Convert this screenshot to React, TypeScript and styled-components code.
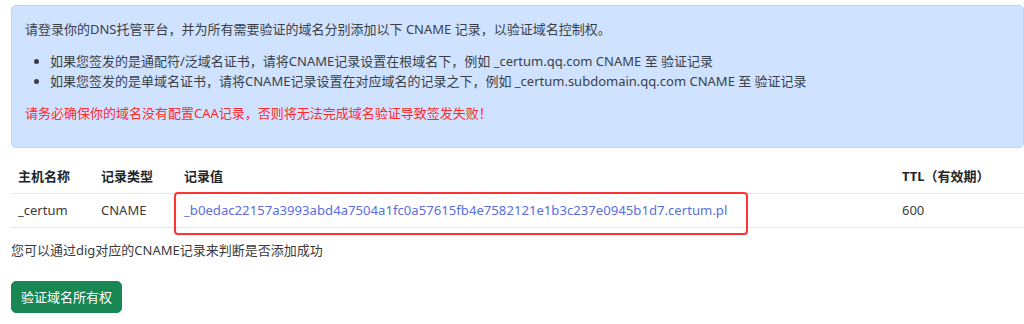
import React from "react";
import styled, { createGlobalStyle } from "styled-components";

const GlobalStyle = createGlobalStyle`
  html, body {
    margin: 0;
    padding: 0;
    background: #ffffff;
  }
  body {
    font-family: "Noto Sans", "Noto Sans CJK SC", sans-serif;
    font-size: 13px;
    line-height: 20px;
    color: #333333;
  }
`;

const Page = styled.div`
  display: flex;
  flex-direction: column;
  padding: 5px 0 0 11px;
  width: 1013px;
`;

const Alert = styled.div`
  background: #cfe2ff;
  border: 1px solid #b6d4fe;
  border-radius: 5px;
  padding: 13px 13px 12px;
  color: #3a3f47;
`;

const Para = styled.p<{ $danger?: boolean }>`
  margin: 0 0 12px;
  color: ${(p) => (p.$danger ? "#ff2a2a" : "inherit")};
`;

const BulletList = styled.ul`
  margin: 0 0 12px;
  padding-left: 25px;
  li {
    margin: 0;
  }
`;

const Table = styled.table`
  margin-top: 12px;
  width: 100%;
  border-collapse: collapse;
  table-layout: fixed;
`;

const HeadCell = styled.th<{ $width?: number }>`
  box-sizing: border-box;
  width: ${(p) => (p.$width ? `${p.$width}px` : "auto")};
  text-align: left;
  font-weight: 700;
  color: #212529;
  padding: 6px 7px 7px;
  border-bottom: 1px solid #e6e8ea;
`;

const Cell = styled.td`
  position: relative;
  padding: 6px 7px 7px;
  border-bottom: 1px solid #e6e8ea;
  color: #3a3a3a;
  white-space: nowrap;
`;

const RecordLink = styled.a`
  color: #5b6ee1;
  font-size: 13.15px;
  text-decoration: none;
`;

const Highlight = styled.span`
  position: absolute;
  left: -3px;
  top: -2px;
  width: 574px;
  height: 43px;
  box-sizing: border-box;
  border: 2px solid #ff3333;
  border-radius: 4px;
  pointer-events: none;
`;

const Hint = styled.p`
  margin: 12px 0 0;
  color: #3a3a3a;
`;

const VerifyButton = styled.button`
  align-self: flex-start;
  margin-top: 21px;
  font-family: inherit;
  font-size: 13px;
  line-height: 20px;
  color: #ffffff;
  background: #198754;
  border: 1px solid #198754;
  border-radius: 5px;
  padding: 5px 9px;
  cursor: pointer;
`;

const record = {
  host: "_certum",
  type: "CNAME",
  value: "_b0edac22157a3993abd4a7504a1fc0a57615fb4e7582121e1b3c237e0945b1d7.certum.pl",
  ttl: 600,
};

export default function App() {
  return (
    <>
      <GlobalStyle />
      <Page>
        <Alert>
          <Para>请登录你的DNS托管平台，并为所有需要验证的域名分别添加以下 CNAME 记录，以验证域名控制权。</Para>
          <BulletList>
            <li>如果您签发的是通配符/泛域名证书，请将CNAME记录设置在根域名下，例如 _certum.qq.com CNAME 至 验证记录</li>
            <li>如果您签发的是单域名证书，请将CNAME记录设置在对应域名的记录之下，例如 _certum.subdomain.qq.com CNAME 至 验证记录</li>
          </BulletList>
          <Para $danger>请务必确保你的域名没有配置CAA记录，否则将无法完成域名验证导致签发失败！</Para>
        </Alert>

        <Table>
          <thead>
            <tr>
              <HeadCell $width={83}>主机名称</HeadCell>
              <HeadCell $width={83}>记录类型</HeadCell>
              <HeadCell>记录值</HeadCell>
              <HeadCell $width={129}>TTL（有效期）</HeadCell>
            </tr>
          </thead>
          <tbody>
            <tr>
              <Cell>{record.host}</Cell>
              <Cell>{record.type}</Cell>
              <Cell>
                <RecordLink href="#">{record.value}</RecordLink>
                <Highlight />
              </Cell>
              <Cell>{record.ttl}</Cell>
            </tr>
          </tbody>
        </Table>

        <Hint>您可以通过dig对应的CNAME记录来判断是否添加成功</Hint>
        <VerifyButton>验证域名所有权</VerifyButton>
      </Page>
    </>
  );
}
